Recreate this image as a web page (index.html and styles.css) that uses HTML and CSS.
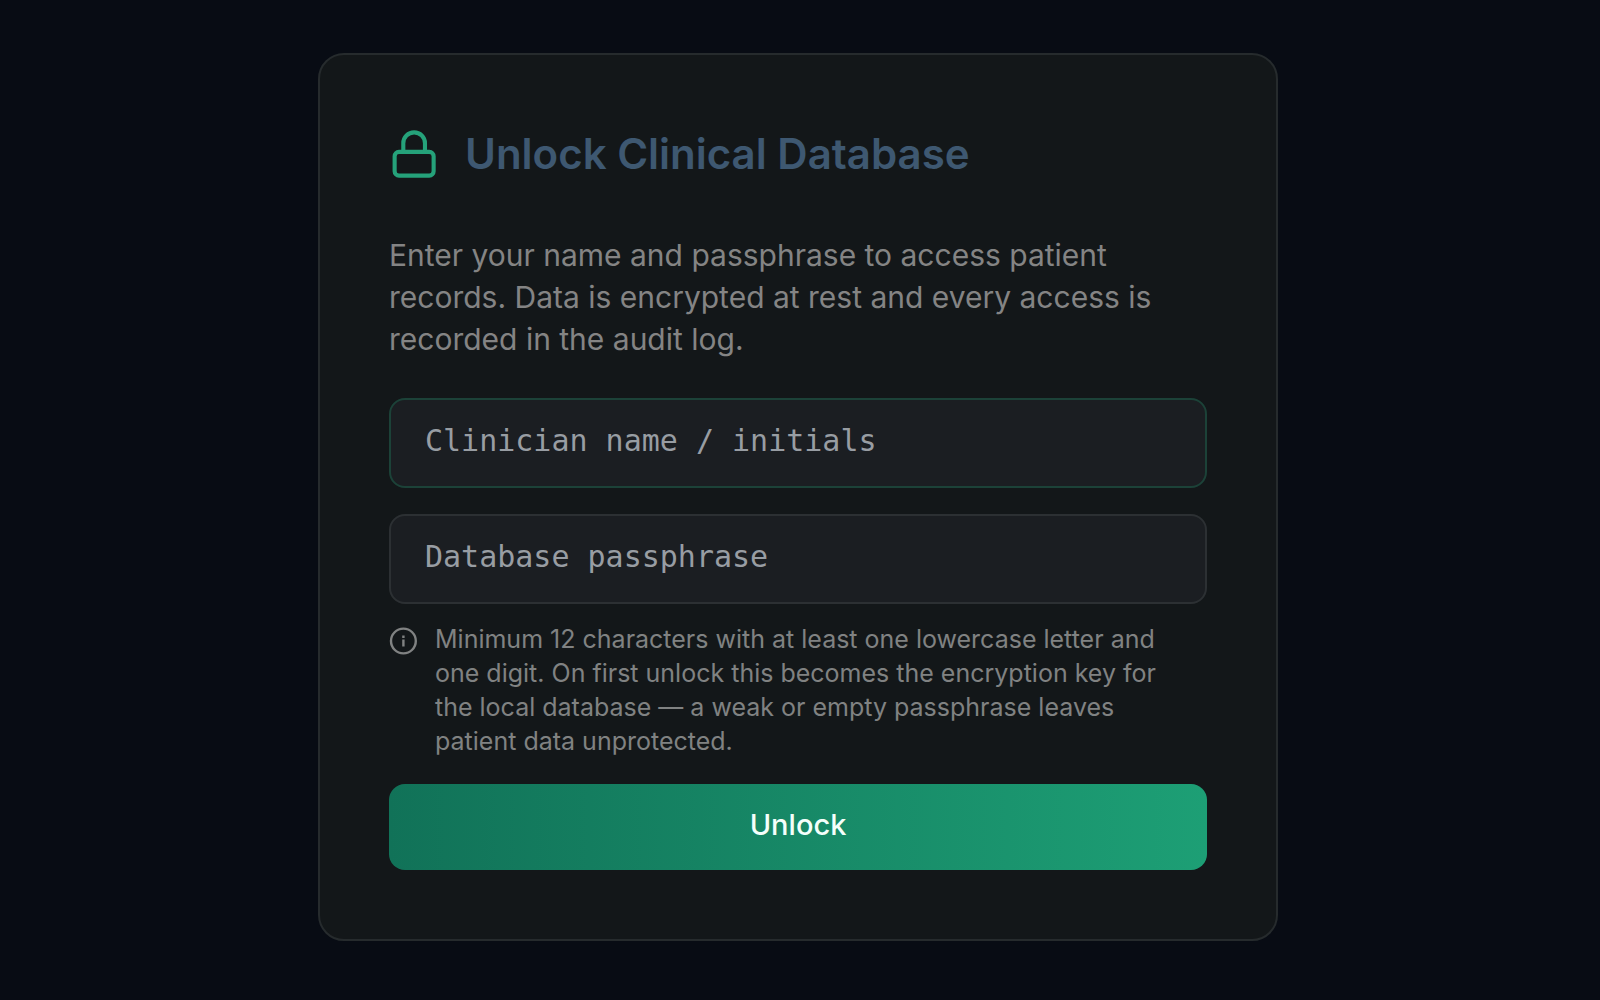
FILE: index.html
```html
<!DOCTYPE html>
<html lang="en">
<head>
<meta charset="utf-8">
<meta name="viewport" content="width=device-width, initial-scale=1">
<title>Unlock Clinical Database</title>
<link rel="stylesheet" href="styles.css">
</head>
<body>
<main class="card">
  <header class="card-head">
    <svg class="lock" viewBox="0 0 24 24" fill="none" stroke="currentColor" stroke-width="1.9" stroke-linecap="round" stroke-linejoin="round" aria-hidden="true"><rect x="2.600" y="11" width="18" height="11" rx="2"/><path d="M6.600 11V7a5 5 0 0 1 10 0v4"/></svg>
    <h1 class="title">Unlock Clinical Database</h1>
  </header>
  <p class="intro">Enter your name and passphrase to access patient records. Data is encrypted at rest and every access is recorded in the audit log.</p>
  <form class="form">
    <div class="fields">
      <input class="field field-active" type="text" aria-label="Clinician name / initials" placeholder="Clinician name / initials">
      <input class="field" type="password" aria-label="Database passphrase" placeholder="Database passphrase">
    </div>
    <div class="hint">
      <svg class="info" viewBox="0 0 28 28" fill="none" stroke="currentColor" stroke-width="2.400" aria-hidden="true"><circle cx="14.400" cy="14" r="12.400"/><path d="M14.400 12.500v7M14.400 8.500v2.400"/></svg>
      <p class="hint-text">Minimum 12 characters with at least one lowercase letter and one digit. On first unlock this becomes the encryption key for the local database — a weak or empty passphrase leaves patient data unprotected.</p>
    </div>
    <button class="unlock" type="submit">Unlock</button>
  </form>
</main>
</body>
</html>
```
FILE: styles.css
```css
* { box-sizing: border-box; }
body {
  margin: 0;
  min-height: 100vh;
  display: flex;
  justify-content: center;
  align-items: flex-start;
  padding: 53px 4px 53px 0;
  background: #080c14;
  font-family: Inter, sans-serif;
}
.card {
  width: 100%;
  max-width: 960px;
  padding: 69px;
  border: 2px solid #262b2d;
  border-radius: 26px;
  background: #131719;
}
.card-head { display: flex; align-items: center; gap: 24px; }
.lock { flex: none; width: 52px; height: 52px; color: #25a27a; }
.title { margin: 0; font-weight: 600; font-size: 42px; line-height: 60px; color: #3e5871; }
.intro { margin: 50px 0 38px; font-size: 30px; line-height: 42px; color: #848484; }
.form { display: flex; flex-direction: column; }
.fields { display: flex; flex-direction: column; gap: 26px; margin-bottom: 18px; }
.field {
  width: 100%;
  height: 90px;
  padding: 0 34px 6px;
  border: 2px solid #2c3033;
  border-radius: 16px;
  background: #1b1e22;
  color: #989da3;
  font: 30px "DejaVu Sans Mono", monospace;
}
.field-active { border-color: #1c4238; }
.field::placeholder { color: #989da3; opacity: 1; }
.hint { display: flex; align-items: flex-start; gap: 18px; padding-right: 32px; color: #808282; }
.info { flex: none; width: 28px; height: 28px; margin-top: 5px; }
.hint-text { margin: 0; font-size: 25px; line-height: 34px; }
.unlock {
  height: 86px;
  margin-top: 26px;
  padding: 0 0 6px;
  border: 0;
  border-radius: 16px;
  background: linear-gradient(90deg, #117258, #1d9f75);
  color: #f4fffb;
  font: 500 29px Inter, sans-serif;
}
```
